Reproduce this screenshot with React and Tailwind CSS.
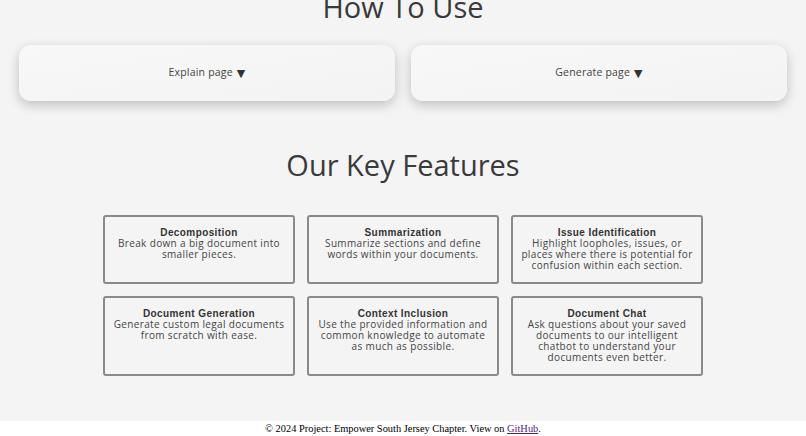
const features = [
  { title: "Decomposition", text: "Break down a big document into smaller pieces." },
  { title: "Summarization", text: "Summarize sections and define words within your documents." },
  { title: "Issue Identification", text: "Highlight loopholes, issues, or places where there is potential for confusion within each section." },
  { title: "Document Generation", text: "Generate custom legal documents from scratch with ease." },
  { title: "Context Inclusion", text: "Use the provided information and common knowledge to automate as much as possible." },
  { title: "Document Chat", text: "Ask questions about your saved documents to our intelligent chatbot to understand your documents even better." },
];

export default function App() {
  return (
    <div className="min-h-screen flex flex-col bg-[#f4f4f4] text-[#3a3a3a] font-['Open_Sans',sans-serif] overflow-hidden">
      <main className="flex-1 flex flex-col">
        <h1 className="mt-[-13px] text-center text-[29px] leading-[40px] font-normal">How To Use</h1>

        <div className="mt-[18px] px-[19px] grid grid-cols-2 gap-4">
          {["Explain page", "Generate page"].map((label) => (
            <button
              key={label}
              className="h-[56px] rounded-xl bg-gradient-to-br from-[#f8f8f8] to-[#f3f3f3] shadow-[0_4px_12px_rgba(0,0,0,0.22)] flex items-center justify-center text-[10.5px] text-[#444] tracking-[0.2px]"
            >
              {label}
              <span className="ml-[4px] text-[11px] leading-none text-[#333] font-['DejaVu_Sans',sans-serif]">▼</span>
            </button>
          ))}
        </div>

        <h2 className="mt-[44px] text-center text-[29px] leading-[40px] font-normal">Our Key Features</h2>

        <div className="mt-[30px] mx-auto w-[600px] grid grid-cols-3 gap-3">
          {features.map((f) => (
            <div key={f.title} className="border-2 border-[#8a8a8a] rounded-[3px] px-[8px] pt-[10px] pb-[11px] text-center text-[10px] leading-[11px]">
              <p className="font-['Liberation_Sans',sans-serif] font-bold text-[#333] tracking-[0.4px]">{f.title}</p>
              <p className="text-[#444] tracking-[0.35px]">{f.text}</p>
            </div>
          ))}
        </div>
      </main>

      <footer className="h-[15px] bg-white flex items-center justify-center font-['Liberation_Serif',serif] text-[10.4px] text-black">
        <p>
          © 2024 Project: Empower South Jersey Chapter. View on{" "}
          <a href="#" className="text-[#551a8b] underline">GitHub</a>.
        </p>
      </footer>
    </div>
  );
}
